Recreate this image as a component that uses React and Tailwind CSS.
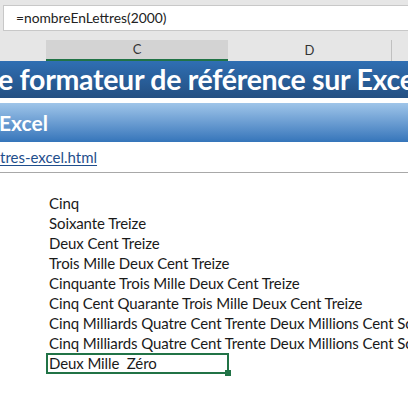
export default function App() {
  const rows = [
    "Cinq",
    "Soixante Treize",
    "Deux Cent Treize",
    "Trois Mille Deux Cent Treize",
    "Cinquante Trois Mille Deux Cent Treize",
    "Cinq Cent Quarante Trois Mille Deux Cent Treize",
    "Cinq Milliards Quatre Cent Trente Deux Millions Cent Soixante Treize Mille",
    "Cinq Milliards Quatre Cent Trente Deux Millions Cent Soixante Treize Mille",
  ];

  return (
    <div className="w-[408px] h-[398px] overflow-hidden bg-white font-['Lato','Open_Sans',sans-serif] text-[#1a1a1a]">
      {/* Formula bar */}
      <div className="bg-[#e6e6e6] pt-[5px] pl-[3px] pb-[9px]">
        <div className="h-[26px] bg-white border border-[#c8c8c8] border-r-0 flex items-center pl-[12px] pt-[1px] text-[13.8px] text-[#222]">
          =nombreEnLettres(2000)
        </div>
      </div>

      {/* Column headers */}
      <div className="flex h-[21px] bg-[#e6e6e6] text-[13px] text-[#333]">
        <div className="w-[46px]" />
        <div className="w-[182px] bg-[#d3d3d3] border-b-2 border-[#217346] flex items-center justify-center">C</div>
        <div className="w-[164px] border-r border-[#c0c0c0] flex items-center justify-center">D</div>
        <div className="flex-1" />
      </div>

      {/* Title */}
      <div className="h-[37px] bg-gradient-to-b from-[#2f6fb3] to-[#234f82] flex items-center whitespace-nowrap text-white font-bold text-[28.5px] tracking-[-0.3px] -ml-[2px]">
        e formateur de référence sur Excel
      </div>
      <div className="h-[5px]" />
      <div className="h-[39px] bg-gradient-to-b from-[#9fc5e9] to-[#3575ba] flex items-center text-white font-bold text-[21px] -ml-[1px]">
        Excel
      </div>
      <div className="h-[30px] flex items-center text-[15px] text-[#1f4e8c] underline decoration-1 underline-offset-2">
        tres-excel.html
      </div>
      <div className="h-[1px] bg-[#a8a8a8]" />

      {/* Cells */}
      <div className="pt-[20px] text-[15px] tracking-[-0.1px]">
        {rows.map((r, i) => (
          <div key={i} className="h-[20px] pl-[49px] flex items-center whitespace-nowrap">
            {r}
          </div>
        ))}
        <div className="relative ml-[46px] w-[183px] h-[21px] border-2 border-[#217346] flex items-center pl-[1px] whitespace-nowrap">
          Deux Mille&nbsp; Zéro
          <div className="absolute -right-[4px] -bottom-[4px] w-[6px] h-[6px] bg-[#217346]" />
        </div>
      </div>
    </div>
  );
}
